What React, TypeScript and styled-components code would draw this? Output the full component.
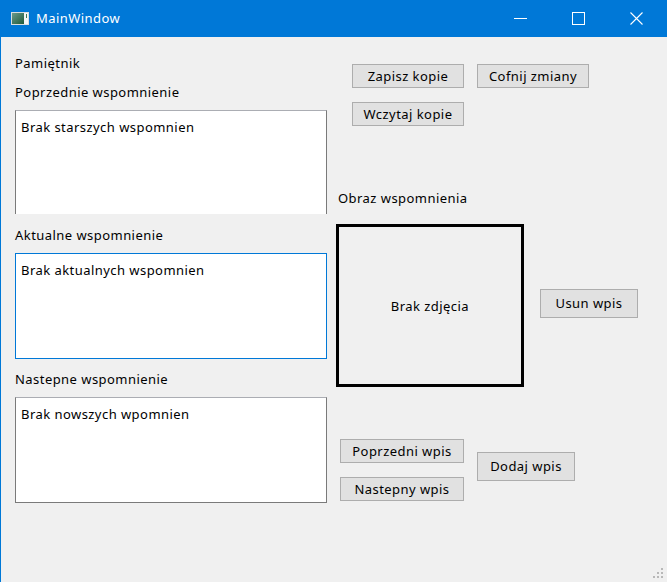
import styled, { createGlobalStyle } from "styled-components"

const GlobalStyle = createGlobalStyle`
  html, body {
    margin: 0;
    padding: 0;
    background: #f0f0f0;
  }
  body {
    font-family: "Noto Sans", "Open Sans", sans-serif;
    font-size: 13px;
    letter-spacing: 0.45px;
    color: #000;
  }
`

const Window = styled.div`
  position: relative;
  width: 667px;
  height: 582px;
  overflow: hidden;
  background: #f0f0f0;
  display: flex;
  flex-direction: column;
`

const TitleBar = styled.div`
  display: flex;
  align-items: center;
  height: 37px;
  background: #0078d7;
  color: #fff;
  flex-shrink: 0;
`

const TitleIcon = styled.div`
  display: flex;
  margin-left: 11px;
  margin-right: 7px;
`

const TitleText = styled.div`
  flex: 1;
  padding-bottom: 1px;
`

const CaptionButton = styled.div`
  width: 58px;
  height: 37px;
  display: flex;
  align-items: center;
  justify-content: center;
  &:last-child {
    margin-right: 2px;
  }
`

const Content = styled.div`
  flex: 1;
  display: flex;
  border-left: 1px solid #0078d7;
  padding-left: 14px;
`

const LeftColumn = styled.div`
  width: 312px;
  display: flex;
  flex-direction: column;
`

const RightColumn = styled.div`
  margin-left: 9px;
  display: flex;
  flex-direction: column;
`

const Label = styled.div<{ $top: number; $left?: number }>`
  height: 20px;
  line-height: 20px;
  margin-top: ${(p) => p.$top}px;
  margin-left: ${(p) => p.$left ?? 0}px;
  white-space: nowrap;
`

const TextBox = styled.div<{ $top: number; $focused?: boolean; $clipped?: boolean }>`
  box-sizing: border-box;
  margin-top: ${(p) => p.$top}px;
  height: ${(p) => (p.$clipped ? 104 : 106)}px;
  background: #fff;
  border: 1px solid ${(p) => (p.$focused ? "#0078d7" : "#7a7a7a")};
  border-top-color: ${(p) => (p.$focused ? "#0078d7" : "#abadb3")};
  ${(p) => (p.$clipped ? "border-bottom: none;" : "")}
  padding: 7px 5px;
  line-height: 18px;
`

const Row = styled.div<{ $top: number; $left?: number; $gap?: number }>`
  display: flex;
  align-items: flex-start;
  margin-top: ${(p) => p.$top}px;
  margin-left: ${(p) => p.$left ?? 0}px;
  gap: ${(p) => p.$gap ?? 0}px;
`

const Stack = styled.div<{ $gap: number }>`
  display: flex;
  flex-direction: column;
  gap: ${(p) => p.$gap}px;
`

const Button = styled.div<{ $w: number; $h: number; $top?: number }>`
  box-sizing: border-box;
  width: ${(p) => p.$w}px;
  height: ${(p) => p.$h}px;
  margin-top: ${(p) => p.$top ?? 0}px;
  background: #e1e1e1;
  border: 1px solid #adadad;
  display: flex;
  align-items: center;
  justify-content: center;
  white-space: nowrap;
  padding-bottom: 1px;
`

const ImageFrame = styled.div`
  box-sizing: border-box;
  width: 188px;
  height: 163px;
  border: 3px solid #000;
  display: flex;
  align-items: center;
  justify-content: center;
  padding-top: 1px;
`

const Grip = styled.svg`
  position: absolute;
  right: 4px;
  bottom: 4px;
`

const App = () => {
  return (
    <>
      <GlobalStyle />
      <Window>
        <TitleBar>
          <TitleIcon>
            <svg width="18" height="13" viewBox="0 0 18 13" shapeRendering="crispEdges">
              <defs>
                <linearGradient id="ig" x1="0" y1="0" x2="1" y2="1">
                  <stop offset="0" stopColor="#6a9a8c" />
                  <stop offset="1" stopColor="#1f5a3a" />
                </linearGradient>
              </defs>
              <rect x="0" y="0" width="18" height="13" fill="#d8dde0" />
              <rect x="1" y="1" width="12" height="11" fill="url(#ig)" />
              <rect x="13" y="1" width="4" height="11" fill="#f4f6f7" />
              <rect x="15" y="2" width="1" height="4" fill="#3b7a55" />
            </svg>
          </TitleIcon>
          <TitleText>MainWindow</TitleText>
          <CaptionButton>
            <svg width="13" height="13" viewBox="0 0 13 13" shapeRendering="crispEdges">
              <rect x="0" y="6" width="13" height="1" fill="#fff" />
            </svg>
          </CaptionButton>
          <CaptionButton>
            <svg width="13" height="13" viewBox="0 0 13 13" shapeRendering="crispEdges">
              <rect x="0.5" y="0.5" width="12" height="12" fill="none" stroke="#fff" strokeWidth="1" />
            </svg>
          </CaptionButton>
          <CaptionButton>
            <svg width="13" height="13" viewBox="0 0 13 13">
              <path d="M0.5 0.5 L12.5 12.5 M12.5 0.5 L0.5 12.5" stroke="#fff" strokeWidth="1.1" />
            </svg>
          </CaptionButton>
        </TitleBar>
        <Content>
          <LeftColumn>
            <Label $top={16}>Pamiętnik</Label>
            <Label $top={9}>Poprzednie wspomnienie</Label>
            <TextBox $top={8} $clipped>Brak starszych wspomnien</TextBox>
            <Label $top={11}>Aktualne wspomnienie</Label>
            <TextBox $top={8} $focused>Brak aktualnych wspomnien</TextBox>
            <Label $top={10}>Nastepne wspomnienie</Label>
            <TextBox $top={8}>Brak nowszych wpomnien</TextBox>
          </LeftColumn>
          <RightColumn>
            <Row $top={27} $left={16} $gap={13}>
              <Button $w={112} $h={24}>Zapisz kopie</Button>
              <Button $w={112} $h={24}>Cofnij zmiany</Button>
            </Row>
            <Row $top={14} $left={16}>
              <Button $w={112} $h={24}>Wczytaj kopie</Button>
            </Row>
            <Label $top={62} $left={2}>Obraz wspomnienia</Label>
            <Row $top={16} $gap={16}>
              <ImageFrame>Brak zdjęcia</ImageFrame>
              <Button $w={98} $h={29} $top={65}>Usun wpis</Button>
            </Row>
            <Row $top={52} $left={4} $gap={13}>
              <Stack $gap={14}>
                <Button $w={124} $h={24}>Poprzedni wpis</Button>
                <Button $w={124} $h={24}>Nastepny wpis</Button>
              </Stack>
              <Button $w={98} $h={29} $top={13}>Dodaj wpis</Button>
            </Row>
          </RightColumn>
        </Content>
        <Grip width="10" height="10" viewBox="0 0 10 10" shapeRendering="crispEdges">
          <rect x="8" y="0" width="2" height="2" fill="#b8b8b8" />
          <rect x="4" y="4" width="2" height="2" fill="#b8b8b8" />
          <rect x="8" y="4" width="2" height="2" fill="#b8b8b8" />
          <rect x="0" y="8" width="2" height="2" fill="#b8b8b8" />
          <rect x="4" y="8" width="2" height="2" fill="#b8b8b8" />
          <rect x="8" y="8" width="2" height="2" fill="#b8b8b8" />
        </Grip>
      </Window>
    </>
  )
}

export default App
